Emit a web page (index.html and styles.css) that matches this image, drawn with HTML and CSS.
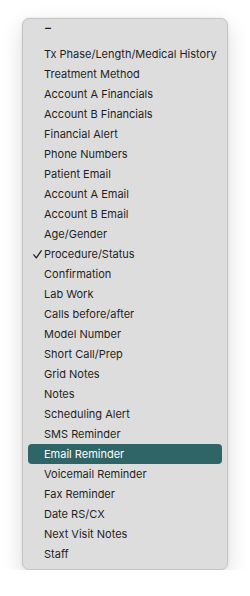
FILE: index.html
```html
<!DOCTYPE html>
<html>
<head>
<meta charset="utf-8">
<link rel="stylesheet" href="styles.css">
</head>
<body>
<div class="menu">
  <div class="top">–</div>
  <div class="item">Tx Phase/Length/Medical History</div>
  <div class="item">Treatment Method</div>
  <div class="item">Account A Financials</div>
  <div class="item">Account B Financials</div>
  <div class="item">Financial Alert</div>
  <div class="item">Phone Numbers</div>
  <div class="item">Patient Email</div>
  <div class="item">Account A Email</div>
  <div class="item">Account B Email</div>
  <div class="item">Age/Gender</div>
  <div class="item checked"><svg class="check" width="9" height="9" viewBox="0 0 9 9"><path d="M0.8 4.8 L3.3 7.8 L8.2 0.8" fill="none" stroke="#222222" stroke-width="1.3" stroke-linecap="round" stroke-linejoin="round"/></svg>Procedure/Status</div>
  <div class="item">Confirmation</div>
  <div class="item">Lab Work</div>
  <div class="item">Calls before/after</div>
  <div class="item">Model Number</div>
  <div class="item">Short Call/Prep</div>
  <div class="item">Grid Notes</div>
  <div class="item">Notes</div>
  <div class="item">Scheduling Alert</div>
  <div class="item">SMS Reminder</div>
  <div class="item active">Email Reminder</div>
  <div class="item">Voicemail Reminder</div>
  <div class="item">Fax Reminder</div>
  <div class="item">Date RS/CX</div>
  <div class="item">Next Visit Notes</div>
  <div class="item">Staff</div>
</div>
</body>
</html>
```
FILE: styles.css
```css
html, body {
  margin: 0;
  padding: 0;
  background: #ffffff;
}
body {
  font-family: Inter, "Liberation Sans", sans-serif;
  font-size: 11px;
  color: #1f1f1f;
}
.menu {
  box-sizing: border-box;
  margin: 18px 0 0 22px;
  width: 206px;
  height: 552px;
  background: #dddddd;
  border: 1px solid #c4c4c4;
  border-radius: 7px;
  box-shadow: 0 8px 22px rgba(0, 0, 0, 0.14), 0 0 3px rgba(0, 0, 0, 0.08);
  padding: 0 5px 5px 5px;
}
.top {
  height: 23px;
  padding-top: 2px;
  line-height: 14px;
  padding-left: 17px;
  font-size: 12px;
  font-weight: 600;
}
.item {
  position: relative;
  height: 20px;
  line-height: 20px;
  padding-left: 16px;
  border-radius: 4px;
  white-space: nowrap;
}
.check {
  position: absolute;
  left: 5px;
  top: 6px;
}
.active {
  background: #2f6566;
  color: #ffffff;
}
```
